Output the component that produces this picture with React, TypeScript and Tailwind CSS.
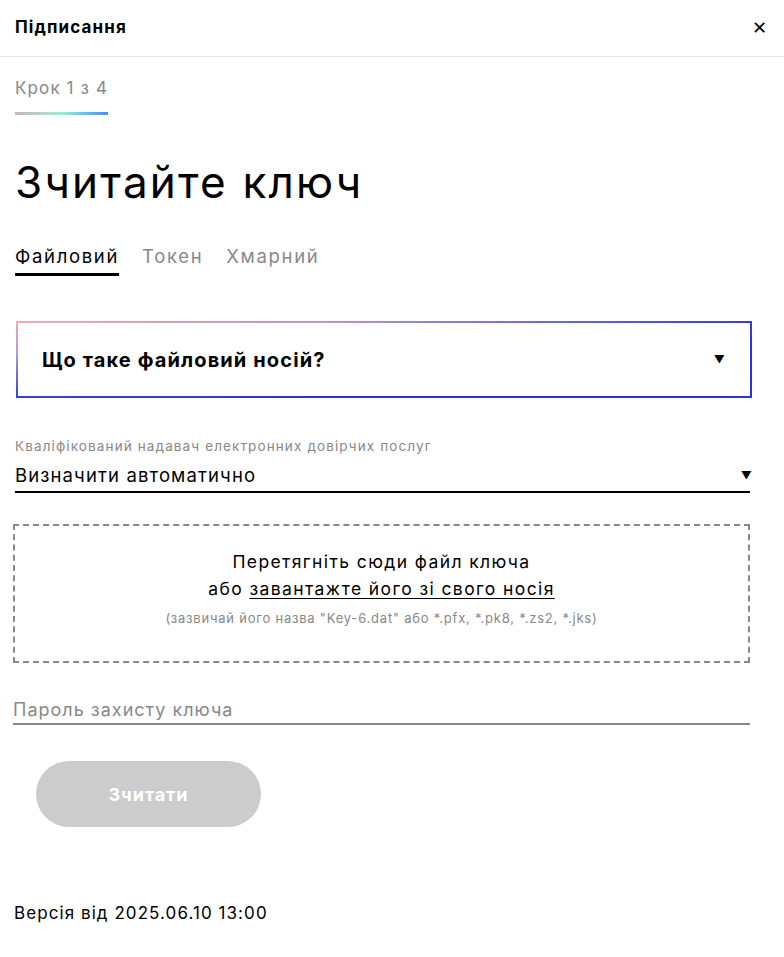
import React from 'react';

const App: React.FC = () => {
    return (
        <div className="w-[784px] min-h-[957px] bg-white text-black tracking-[0.07em] font-['Inter',_'Noto_Sans',_sans-serif]">
            {/* header */}
            <div className="flex items-center justify-between h-[57px] px-[15px] border-b border-[#e6e6e6]">
                <h2 className="text-[17px] font-bold">Підписання</h2>
                <button className="text-[18px] font-medium leading-none pr-px">✕</button>
            </div>

            <div className="px-[15px]">
                {/* step */}
                <div className="pt-[20px]">
                    <div className="text-[17px] text-[#888] leading-[22px]">Крок 1 з 4</div>
                    <div className="mt-[13px] w-[93px] h-[3px] bg-gradient-to-r from-[#c9b5bf] via-[#9debd1] to-[#4f8bf2]" />
                </div>

                <h1 className="mt-[37px] text-[44px] leading-[60px] font-normal tracking-[0.05em]">Зчитайте ключ</h1>

                {/* tabs */}
                <div className="mt-[32px] flex gap-[23px] text-[18.5px] leading-[24px] tracking-[0.09em]">
                    <div className="pb-[5px] border-b-[3px] border-black">Файловий</div>
                    <div className="text-[#888]">Токен</div>
                    <div className="text-[#888]">Хмарний</div>
                </div>

                {/* accordion */}
                <div className="mt-[45px] ml-px w-[736px] p-[2px] bg-[radial-gradient(ellipse_at_top_left,#f3a9b1_0%,#b996cf_30%,#5b63dc_55%,#2a34d2_75%)]">
                    <div className="flex items-center justify-between h-[73px] bg-white pl-[24px] pr-[24px]">
                        <span className="text-[20px] font-bold">Що таке файловий носій?</span>
                        <span className="text-[11px]">▼</span>
                    </div>
                </div>

                {/* provider select */}
                <div className="mt-[39px] w-[735px]">
                    <div className="text-[13.5px] text-[#888] leading-[18px]">Кваліфікований надавач електронних довірчих послуг</div>
                    <div className="mt-[8px] flex items-center justify-between pb-[4px] border-b-2 border-black">
                        <span className="text-[18.5px] leading-[24px]">Визначити автоматично</span>
                        <span className="text-[11px] -mr-[3px]">▼</span>
                    </div>
                </div>

                {/* drop zone */}
                <div className="mt-[31px] -ml-[2px] w-[737px] h-[139px] border-2 border-dashed border-[#888] flex flex-col items-center pt-[22px]">
                    <div className="text-[17.5px] leading-[27px] tracking-[0.08em]">Перетягніть сюди файл ключа</div>
                    <div className="text-[17.5px] leading-[27px] tracking-[0.08em]">
                        або <span className="underline underline-offset-[3px]">завантажте його зі свого носія</span>
                    </div>
                    <div className="mt-[7px] text-[13px] leading-[18px] text-[#888] tracking-[0.06em]">(зазвичай його назва "Key-6.dat" або *.pfx, *.pk8, *.zs2, *.jks)</div>
                </div>

                {/* password */}
                <div className="mt-[36px] -ml-[2px] w-[737px] border-b-2 border-[#888] pb-[2px]">
                    <div className="text-[18px] leading-[22px] text-[#888] tracking-[0.056em]">Пароль захисту ключа</div>
                </div>

                {/* button */}
                <button className="mt-[36px] ml-[21px] w-[225px] h-[66px] rounded-full bg-[#cccccc] text-white text-[18px] font-bold tracking-[0.05em]">
                    Зчитати
                </button>

                <div className="mt-[74px] -ml-px text-[17px] leading-[24px] tracking-[0.063em]">Версія від 2025.06.10 13:00</div>
            </div>
        </div>
    );
};

export default App;
